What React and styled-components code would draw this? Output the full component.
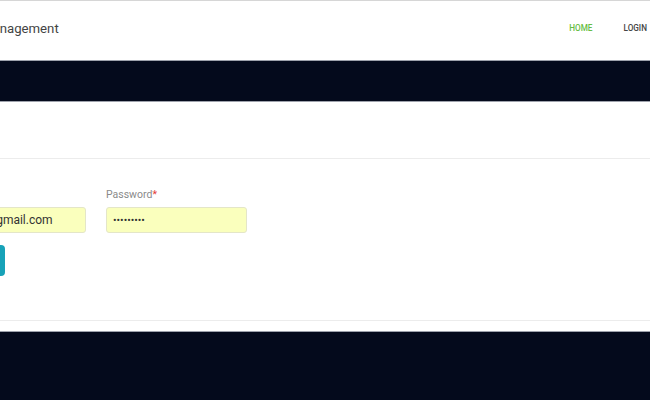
import React from "react";
import styled, { createGlobalStyle } from "styled-components";

const Global = createGlobalStyle`
  html, body { margin: 0; padding: 0; background: #fff; overflow: hidden; }
  body { font-family: Roboto, "Liberation Sans", Arial, sans-serif; }
  * { box-sizing: border-box; }
`;

const Page = styled.div`
  width: 650px;
  height: 400px;
  display: flex;
  flex-direction: column;
  overflow: hidden;
`;

const Header = styled.header`
  height: 60px;
  flex: none;
  border-top: 1px solid #d6d6d6;
  display: flex;
  align-items: center;
  justify-content: space-between;
  background: #fff;
`;

const Brand = styled.div`
  font-size: 13.2px;
  color: #444;
  margin-left: -19px;
  margin-top: -5px;
  white-space: nowrap;
`;

const Nav = styled.nav`
  display: flex;
  gap: 31px;
  margin-right: 3px;
  margin-top: -6px;
`;

const NavLink = styled.a`
  font-size: 8.2px;
  font-weight: 500;
  text-transform: uppercase;
  color: ${(p) => (p.$active ? "#67bd45" : "#444")};
  text-decoration: none;
`;

const Band = styled.div`
  height: 42px;
  flex: none;
  background: #040a1c;
  border-top: 1px solid #9ea2ac;
  border-bottom: 1px solid #9ea2ac;
`;

const Section = styled.div`
  height: 57px;
  flex: none;
  border-bottom: 1px solid #ececec;
`;

const FormArea = styled.div`
  flex: none;
  padding: 29px 0 44px;
  margin-left: -55px;
  border-bottom: 1px solid #ececec;
`;

const Row = styled.div`
  display: flex;
  gap: 20px;
`;

const Field = styled.div`
  display: flex;
  flex-direction: column;
  width: 141px;
`;

const Label = styled.label`
  font-size: 10.5px;
  color: #8a8a8a;
  height: 14px;
  margin-bottom: 5px;
  span { color: #e53935; }
`;

const Input = styled.input`
  height: 26px;
  width: 141px;
  border: 1px solid #e4e6c8;
  border-radius: 3px;
  background: #faffbd;
  font-family: Roboto, "Liberation Sans", Arial, sans-serif;
  font-size: ${(p) => (p.type === "password" ? "10.5px" : "12px")};
  color: #333;
  padding: 0 8px 0 ${(p) => (p.type === "password" ? "6px" : "6px")};
  outline: none;
`;

const Button = styled.button`
  margin-top: 12px;
  width: 60px;
  height: 31px;
  border: none;
  border-radius: 4px;
  background: #17a2b8;
  color: #fff;
  font-size: 12px;
`;

const Gap = styled.div`
  height: 10px;
  flex: none;
`;

const Footer = styled.footer`
  flex: 1;
  background: #040a1c;
  border-top: 1px solid #9ea2ac;
`;

export default function App() {
  return (
    <>
      <Global />
      <Page>
        <Header>
          <Brand>Management</Brand>
          <Nav>
            <NavLink $active href="#">Home</NavLink>
            <NavLink href="#">Login</NavLink>
          </Nav>
        </Header>
        <Band />
        <Section />
        <FormArea>
          <Row>
            <Field>
              <Label>Email<span>*</span></Label>
              <Input type="email" defaultValue="admin@gmail.com" />
            </Field>
            <Field>
              <Label>Password<span>*</span></Label>
              <Input type="password" defaultValue="123456789" />
            </Field>
          </Row>
          <Button>Login</Button>
        </FormArea>
        <Gap />
        <Footer />
      </Page>
    </>
  );
}
